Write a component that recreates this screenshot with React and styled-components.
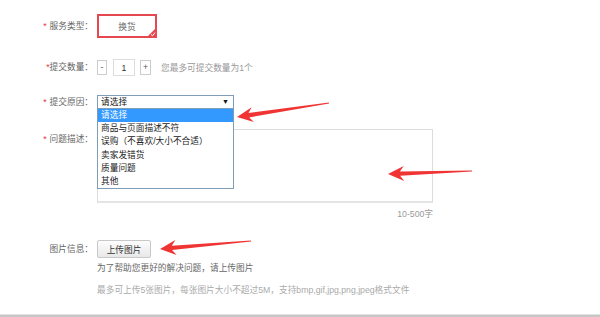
import styled, { createGlobalStyle } from "styled-components";

const GlobalStyle = createGlobalStyle`
  body {
    margin: 0;
    background: #fff;
    font-family: "Liberation Sans", "Noto Sans CJK SC", sans-serif;
    font-size: 8.7px;
    color: #666;
  }
`;

const Page = styled.div`
  position: relative;
  width: 600px;
  height: 317px;
  overflow: hidden;
  display: flex;
  flex-direction: column;
`;

const Form = styled.div`
  flex: 1;
  padding-top: 14px;
`;

const Row = styled.div`
  display: flex;
  align-items: ${(p) => (p.$top ? "flex-start" : "center")};
  margin-top: ${(p) => p.$mt || 0}px;
`;

const Label = styled.div`
  width: 97px;
  flex: none;
  box-sizing: border-box;
  padding-right: 4px;
  padding-top: ${(p) => p.$pt || 0}px;
  text-align: right;
  line-height: 13px;
  color: #666;
  white-space: nowrap;
`;

const Star = styled.span`
  color: #e4393c;
  margin-right: ${(p) => p.$gap || 0}px;
`;

const Col = styled.div`
  display: flex;
  flex-direction: column;
`;

const ServiceBox = styled.div`
  position: relative;
  width: 60px;
  height: 24px;
  box-sizing: border-box;
  border: 2px solid #e5484e;
  display: flex;
  align-items: center;
  justify-content: center;
  color: #666;
`;

const Corner = styled.svg`
  position: absolute;
  right: -1px;
  bottom: -1px;
`;

const StepBtn = styled.div`
  width: ${(p) => p.$w}px;
  height: 15px;
  box-sizing: border-box;
  border: 1px solid #ccc;
  display: flex;
  align-items: center;
  justify-content: center;
  color: #555;
  line-height: 1;
`;

const Qty = styled.div`
  width: 22px;
  height: 17px;
  box-sizing: border-box;
  border: 1px solid #ddd;
  margin: 0 5px 0 6px;
  display: flex;
  align-items: center;
  justify-content: center;
  color: #333;
`;

const Hint = styled.span`
  margin-left: 10px;
  color: ${(p) => p.$color || "#999"};
`;

const SelectWrap = styled.div`
  position: relative;
  width: 137px;
`;

const Select = styled.div`
  height: 14px;
  box-sizing: border-box;
  border: 1px solid #7f9db9;
  display: flex;
  align-items: center;
  justify-content: space-between;
  padding: 0 4px 0 3px;
  color: #111;
  line-height: 12px;
`;

const Caret = styled.span`
  font-size: 7px;
  color: #111;
`;

const Dropdown = styled.div`
  position: absolute;
  top: 100%;
  left: 0;
  width: 137px;
  box-sizing: border-box;
  margin-top: -1px;
  border: 1px solid #7f9db9;
  background: #fff;
  z-index: 2;
`;

const Option = styled.div`
  height: 13.2px;
  line-height: 13.2px;
  padding-left: 3px;
  color: ${(p) => (p.$active ? "#fff" : "#222")};
  background: ${(p) => (p.$active ? "#3399ff" : "transparent")};
  white-space: nowrap;
`;

const TextBox = styled.div`
  width: 336px;
  height: 74px;
  box-sizing: border-box;
  border: 1px solid #dcdcdc;
  border-bottom: 2px solid #e4e4e4;
`;

const Count = styled.div`
  margin-top: 5px;
  text-align: right;
  line-height: 13px;
  color: #999;
`;

const UploadBtn = styled.div`
  width: 54px;
  height: 18px;
  box-sizing: border-box;
  border: 1px solid #c8c8c8;
  border-radius: 2px;
  background: linear-gradient(#fdfdfd, #e8e8e8);
  display: flex;
  align-items: center;
  justify-content: center;
  color: #333;
`;

const Line = styled.div`
  margin-top: ${(p) => p.$mt}px;
  line-height: 13px;
  color: ${(p) => p.$color};
  white-space: nowrap;
`;

const Footer = styled.div`
  flex: none;
  height: 3px;
  box-sizing: border-box;
  border-top: 1px solid #e2e2e2;
  background: #c6c6c6;
`;

const Overlay = styled.svg`
  position: absolute;
  left: 0;
  top: 0;
  pointer-events: none;
  z-index: 5;
`;

function arrowPoints(tip, tail, headLen = 16, headHalf = 7.5, neckHalf = 2.2, tailHalf = 0.6) {
  const dx = tail[0] - tip[0];
  const dy = tail[1] - tip[1];
  const len = Math.hypot(dx, dy);
  const d = [dx / len, dy / len];
  const n = [-d[1], d[0]];
  const at = (k, m) => [tip[0] + d[0] * k + n[0] * m, tip[1] + d[1] * k + n[1] * m];
  const pts = [
    tip,
    at(headLen, headHalf),
    at(headLen - 4, neckHalf),
    [tail[0] + n[0] * tailHalf, tail[1] + n[1] * tailHalf],
    [tail[0] - n[0] * tailHalf, tail[1] - n[1] * tailHalf],
    at(headLen - 4, -neckHalf),
    at(headLen, -headHalf),
  ];
  return pts.map((p) => p.map((v) => v.toFixed(1)).join(",")).join(" ");
}

const arrows = [
  { tip: [237, 117], tail: [329, 103] },
  { tip: [388, 174], tail: [472, 171] },
  { tip: [160, 249], tail: [251, 241] },
];

const reasons = ["请选择", "商品与页面描述不符", "误购（不喜欢/大小不合适）", "卖家发错货", "质量问题", "其他"];

function App() {
  return (
    <>
      <GlobalStyle />
      <Page>
        <Form>
          <Row>
            <Label>
              <Star $gap={3}>*</Star>服务类型：
            </Label>
            <ServiceBox>
              换货
              <Corner width="9" height="9" viewBox="0 0 9 9">
                <polygon points="9,0 9,9 0,9" fill="#e5484e" />
                <polyline points="4,6.5 5.5,7.8 8,4.6" fill="none" stroke="#fff" strokeWidth="1" />
              </Corner>
            </ServiceBox>
          </Row>

          <Row $mt={21}>
            <Label>
              <Star>*</Star>提交数量：
            </Label>
            <StepBtn $w={10}>-</StepBtn>
            <Qty>1</Qty>
            <StepBtn $w={11}>+</StepBtn>
            <Hint>您最多可提交数量为1个</Hint>
          </Row>

          <Row $mt={19}>
            <Label>
              <Star $gap={3}>*</Star>提交原因：
            </Label>
            <SelectWrap>
              <Select>
                请选择
                <Caret>▼</Caret>
              </Select>
              <Dropdown>
                {reasons.map((r, i) => (
                  <Option key={r} $active={i === 0}>
                    {r}
                  </Option>
                ))}
              </Dropdown>
            </SelectWrap>
          </Row>

          <Row $mt={20} $top>
            <Label $pt={4}>
              <Star $gap={3}>*</Star>问题描述：
            </Label>
            <Col>
              <TextBox />
              <Count>10-500字</Count>
            </Col>
          </Row>

          <Row $mt={19} $top>
            <Label $pt={3}>图片信息：</Label>
            <Col>
              <UploadBtn>上传图片</UploadBtn>
              <Line $mt={4} $color="#666">
                为了帮助您更好的解决问题，请上传图片
              </Line>
              <Line $mt={9} $color="#aaa">
                最多可上传5张图片，每张图片大小不超过5M，支持bmp,gif,jpg,png,jpeg格式文件
              </Line>
            </Col>
          </Row>
        </Form>
        <Footer />
        <Overlay width="600" height="317" viewBox="0 0 600 317">
          {arrows.map((a, i) => (
            <polygon key={i} points={arrowPoints(a.tip, a.tail)} fill="#f03434" />
          ))}
        </Overlay>
      </Page>
    </>
  );
}

export default App;
